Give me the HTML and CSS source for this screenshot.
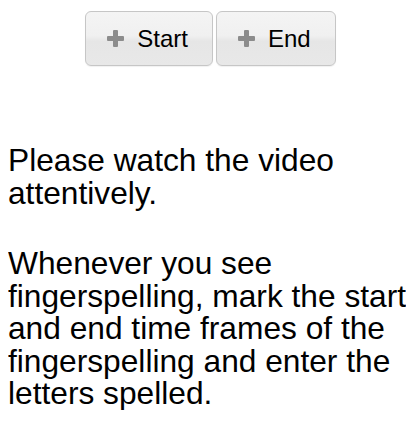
FILE: index.html
```html
<!DOCTYPE html>
<html>
<head>
<meta charset="utf-8">
<link rel="stylesheet" href="styles.css">
</head>
<body>
<div class="toolbar">
  <button class="btn"><span class="plus"></span><span>Start</span></button>
  <button class="btn"><span class="plus"></span><span>End</span></button>
</div>
<div class="instructions">
  <p>Please watch the video attentively.</p>
  <p>Whenever you see fingerspelling, mark the start and end time frames of the fingerspelling and enter the letters spelled.</p>
</div>
</body>
</html>
```
FILE: styles.css
```css
html, body {
  background: #ffffff;
}
body {
  margin: 8px;
  font-family: "Liberation Sans", Arial, sans-serif;
  color: #000;
}
.toolbar {
  display: flex;
  justify-content: center;
  gap: 3px;
  margin-top: 3px;
  padding-left: 7px;
}
.btn {
  display: inline-flex;
  align-items: center;
  gap: 13px;
  height: 55px;
  padding: 0 24px 0 21px;
  font-family: "Liberation Sans", Arial, sans-serif;
  font-size: 24px;
  color: #000;
  border: 1px solid #c6c6c6;
  border-radius: 6px;
  background: linear-gradient(#f4f4f4 0%, #f0f0f0 45%, #e6e6e6 55%, #e8e8e8 100%);
  box-shadow: 0 1px 1px rgba(0,0,0,0.06);
}
.plus {
  position: relative;
  width: 17px;
  height: 17px;
  flex: none;
}
.plus::before, .plus::after {
  content: "";
  position: absolute;
  background: #8c8c8c;
  border-radius: 1px;
}
.plus::before {
  left: 0; right: 0; top: 6px; height: 5px;
}
.plus::after {
  top: 0; bottom: 0; left: 6px; width: 5px;
}
.instructions {
  margin-top: 78px;
  margin-right: -8px;
  font-size: 31.7px;
  line-height: 32.5px;
}
.instructions p {
  margin: 0 0 38px;
}
.instructions p:last-child {
  margin-bottom: 0;
}
```
